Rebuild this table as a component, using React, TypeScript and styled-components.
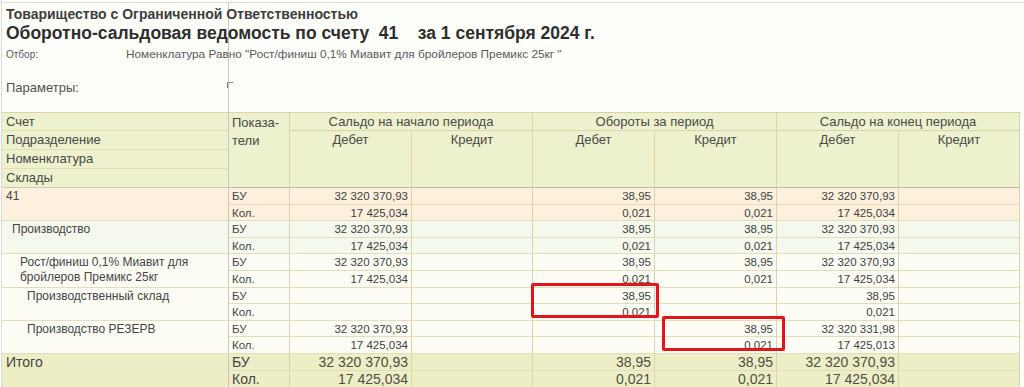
import React from 'react';
import styled, { createGlobalStyle } from 'styled-components';

type Tone = 'peach' | 'mint' | 'cream' | 'total';

const tones: Record<Tone, string> = {
  peach: '#fdf0dc',
  mint: '#f5f8ec',
  cream: '#fefdf5',
  total: '#edeec6',
};

interface Group {
  label: string;
  indent: number;
  tone: Tone;
  bu: string[];
  qty: string[];
}

const full = {
  bu: ['32 320 370,93', '', '38,95', '38,95', '32 320 370,93', ''],
  qty: ['17 425,034', '', '0,021', '0,021', '17 425,034', ''],
};

const groups: Group[] = [
  { label: '41', indent: 4, tone: 'peach', ...full },
  { label: 'Производство', indent: 10, tone: 'mint', ...full },
  { label: 'Рост/финиш 0,1% Миавит для бройлеров Премикс 25кг', indent: 18, tone: 'cream', ...full },
  {
    label: 'Производственный склад',
    indent: 25,
    tone: 'cream',
    bu: ['', '', '38,95', '', '38,95', ''],
    qty: ['', '', '0,021', '', '0,021', ''],
  },
  {
    label: 'Производство РЕЗЕРВ',
    indent: 25,
    tone: 'cream',
    bu: ['32 320 370,93', '', '', '38,95', '32 320 331,98', ''],
    qty: ['17 425,034', '', '', '0,021', '17 425,013', ''],
  },
];

const total: Group = { label: 'Итого', indent: 4, tone: 'total', ...full };

const GlobalStyle = createGlobalStyle`
  html, body {
    margin: 0;
    padding: 0;
    background: #fefefb;
  }
  body {
    font-family: "Liberation Sans", Arial, sans-serif;
    color: #404040;
  }
`;

const Sheet = styled.div`
  width: 1023px;
  height: 387px;
  margin-left: 1px;
  border-left: 1px solid #dadada;
  box-sizing: border-box;
  overflow: hidden;
`;

const TopArea = styled.div`
  display: grid;
  grid-template-columns: 227px 1fr;
  grid-template-rows: 21px 19px 24px 36px 12px;
  margin-top: 2px;
  border-top: 1px solid #dcdcdc;
  height: 110px;
  box-sizing: border-box;
`;

const TopLeft = styled.div<{ $pad?: number }>`
  border-right: 1px solid #c6c6c6;
  padding-left: 4px;
  padding-top: ${(p) => p.$pad ?? 0}px;
  white-space: nowrap;
  overflow: visible;
  position: relative;
  z-index: 1;
`;

const TopRight = styled.div`
  position: relative;
`;

const Company = styled.div`
  font-size: 14px;
  font-weight: bold;
  line-height: 17px;
  color: #3d3d3d;
`;

const Title = styled.div`
  font-size: 17.5px;
  font-weight: bold;
  line-height: 19px;
  color: #2e2e2e;
  white-space: pre;
`;

const FilterRow = styled.div`
  display: flex;
  align-items: baseline;
  line-height: 13px;
  color: #5a5a5a;
`;

const FilterLabel = styled.span`
  flex: 0 0 120px;
  font-size: 10px;
`;

const FilterValue = styled.span`
  flex: 0 0 auto;
  font-size: 11.8px;
`;

const Params = styled.div`
  font-size: 13px;
  line-height: 16px;
  color: #505050;
`;

const Tick = styled.span`
  display: block;
  width: 5px;
  height: 5px;
  margin: 15px 0 0 -2px;
  border-top: 1px solid #777;
  border-left: 1px solid #777;
`;

const Table = styled.div`
  position: relative;
  display: grid;
  grid-template-columns: 227px 61px 122px 121px 122px 122px 122px 121px;
  grid-template-rows: 18px 19px 19px 19px repeat(10, 16.6px) 17px 17px;
  border-top: 1px solid #d9d5a8;
  width: 1019px;
  font-size: 11.5px;
`;

const base = `
  box-sizing: border-box;
  overflow: hidden;
  white-space: nowrap;
`;

const HeadLabel = styled.div<{ $last?: boolean }>`
  ${base}
  background: #eef1cd;
  border-right: 1px solid #c6c6c6;
  border-bottom: 1px solid ${(p) => (p.$last ? '#c9c9b8' : '#e2dcb0')};
  padding-left: 4px;
  font-size: 13px;
  line-height: 18px;
  color: #474747;
`;

const IndicatorHead = styled.div`
  ${base}
  grid-row: span 4;
  background: #eef1cd;
  border-right: 1px solid #d9d5a8;
  border-bottom: 1px solid #b9b9ac;
  padding: 1px 3px 0;
  font-size: 13px;
  line-height: 18px;
  color: #474747;
  white-space: normal;
`;

const GroupHead = styled.div`
  ${base}
  grid-column: span 2;
  background: #eef1cd;
  border-right: 1px solid #d9d5a8;
  border-bottom: 1px solid #d9d5a8;
  text-align: center;
  font-size: 13px;
  line-height: 17px;
  color: #4a4a4a;
`;

const SubHead = styled.div`
  ${base}
  grid-row: span 3;
  background: #eef1cd;
  border-right: 1px solid #d9d5a8;
  border-bottom: 1px solid #b9b9ac;
  text-align: center;
  font-size: 13px;
  line-height: 17px;
  color: #4a4a4a;
`;

const RowLabel = styled.div<{ $tone: Tone; $indent: number; $big?: boolean }>`
  ${base}
  grid-row: span 2;
  background: ${(p) => tones[p.$tone]};
  border-right: 1px solid #c6c6c6;
  border-bottom: 1px solid #e3ddbb;
  padding: ${(p) => (p.$big ? '0' : '1px')} 6px 0 ${(p) => p.$indent}px;
  font-size: ${(p) => (p.$big ? '14px' : '12px')};
  line-height: ${(p) => (p.$big ? '17px' : '15px')};
  color: #454545;
  white-space: normal;
`;

const IndicatorCell = styled.div<{ $tone: Tone; $big?: boolean }>`
  ${base}
  background: ${(p) => tones[p.$tone]};
  border-right: 1px solid #d9d5a8;
  border-bottom: 1px solid #e3ddbb;
  padding-left: 3px;
  font-size: ${(p) => (p.$big ? '14px' : '11.5px')};
  line-height: ${(p) => (p.$big ? '17px' : '16px')};
  color: #454545;
`;

const ValueCell = styled.div<{ $tone: Tone; $big?: boolean }>`
  ${base}
  background: ${(p) => tones[p.$tone]};
  border-right: 1px solid #d9d5a8;
  border-bottom: 1px solid #e3ddbb;
  padding-right: 3px;
  text-align: right;
  font-size: ${(p) => (p.$big ? '14px' : '11.5px')};
  line-height: ${(p) => (p.$big ? '17px' : '16px')};
  color: ${(p) => (p.$big ? '#4f4f45' : '#404040')};
`;

const Highlight = styled.div<{ $left: number; $top: number; $w: number; $h: number }>`
  position: absolute;
  left: ${(p) => p.$left}px;
  top: ${(p) => p.$top}px;
  width: ${(p) => p.$w}px;
  height: ${(p) => p.$h}px;
  border: 3px solid #e3141b;
  border-radius: 2px;
  box-sizing: border-box;
  pointer-events: none;
`;

function GroupRows({ group, big }: { group: Group; big?: boolean }) {
  return (
    <>
      <RowLabel $tone={group.tone} $indent={group.indent} $big={big}>
        {group.label}
      </RowLabel>
      <IndicatorCell $tone={group.tone} $big={big}>БУ</IndicatorCell>
      {group.bu.map((v, i) => (
        <ValueCell key={'b' + i} $tone={group.tone} $big={big}>
          {v}
        </ValueCell>
      ))}
      <IndicatorCell $tone={group.tone} $big={big}>Кол.</IndicatorCell>
      {group.qty.map((v, i) => (
        <ValueCell key={'q' + i} $tone={group.tone} $big={big}>
          {v}
        </ValueCell>
      ))}
    </>
  );
}

export default function App() {
  const sections = ['Сальдо на начало периода', 'Обороты за период', 'Сальдо на конец периода'];
  return (
    <>
      <GlobalStyle />
      <Sheet>
        <TopArea>
          <TopLeft $pad={3}>
            <Company>Товарищество с Ограниченной Ответственностью</Company>
          </TopLeft>
          <TopRight />
          <TopLeft>
            <Title>{'Оборотно-сальдовая ведомость по счету  41    за 1 сентября 2024 г.'}</Title>
          </TopLeft>
          <TopRight />
          <TopLeft $pad={5}>
            <FilterRow>
              <FilterLabel>Отбор:</FilterLabel>
              <FilterValue>Номенклатура Равно "Рост/финиш 0,1% Миавит для бройлеров Премикс 25кг "</FilterValue>
            </FilterRow>
          </TopLeft>
          <TopRight />
          <TopLeft $pad={13}>
            <Params>Параметры:</Params>
          </TopLeft>
          <TopRight>
            <Tick />
          </TopRight>
          <TopLeft />
          <TopRight />
        </TopArea>

        <Table>
          <HeadLabel>Счет</HeadLabel>
          <IndicatorHead>Показа-<br />тели</IndicatorHead>
          {sections.map((s) => (
            <GroupHead key={s}>{s}</GroupHead>
          ))}
          <HeadLabel>Подразделение</HeadLabel>
          {sections.map((s) => (
            <React.Fragment key={s}>
              <SubHead>Дебет</SubHead>
              <SubHead>Кредит</SubHead>
            </React.Fragment>
          ))}
          <HeadLabel>Номенклатура</HeadLabel>
          <HeadLabel $last>Склады</HeadLabel>

          {groups.map((g) => (
            <GroupRows key={g.label} group={g} />
          ))}
          <GroupRows group={total} big />

          <Highlight $left={529} $top={170} $w={128} $h={35} />
          <Highlight $left={660} $top={203} $w={123} $h={35} />
        </Table>
      </Sheet>
    </>
  );
}
